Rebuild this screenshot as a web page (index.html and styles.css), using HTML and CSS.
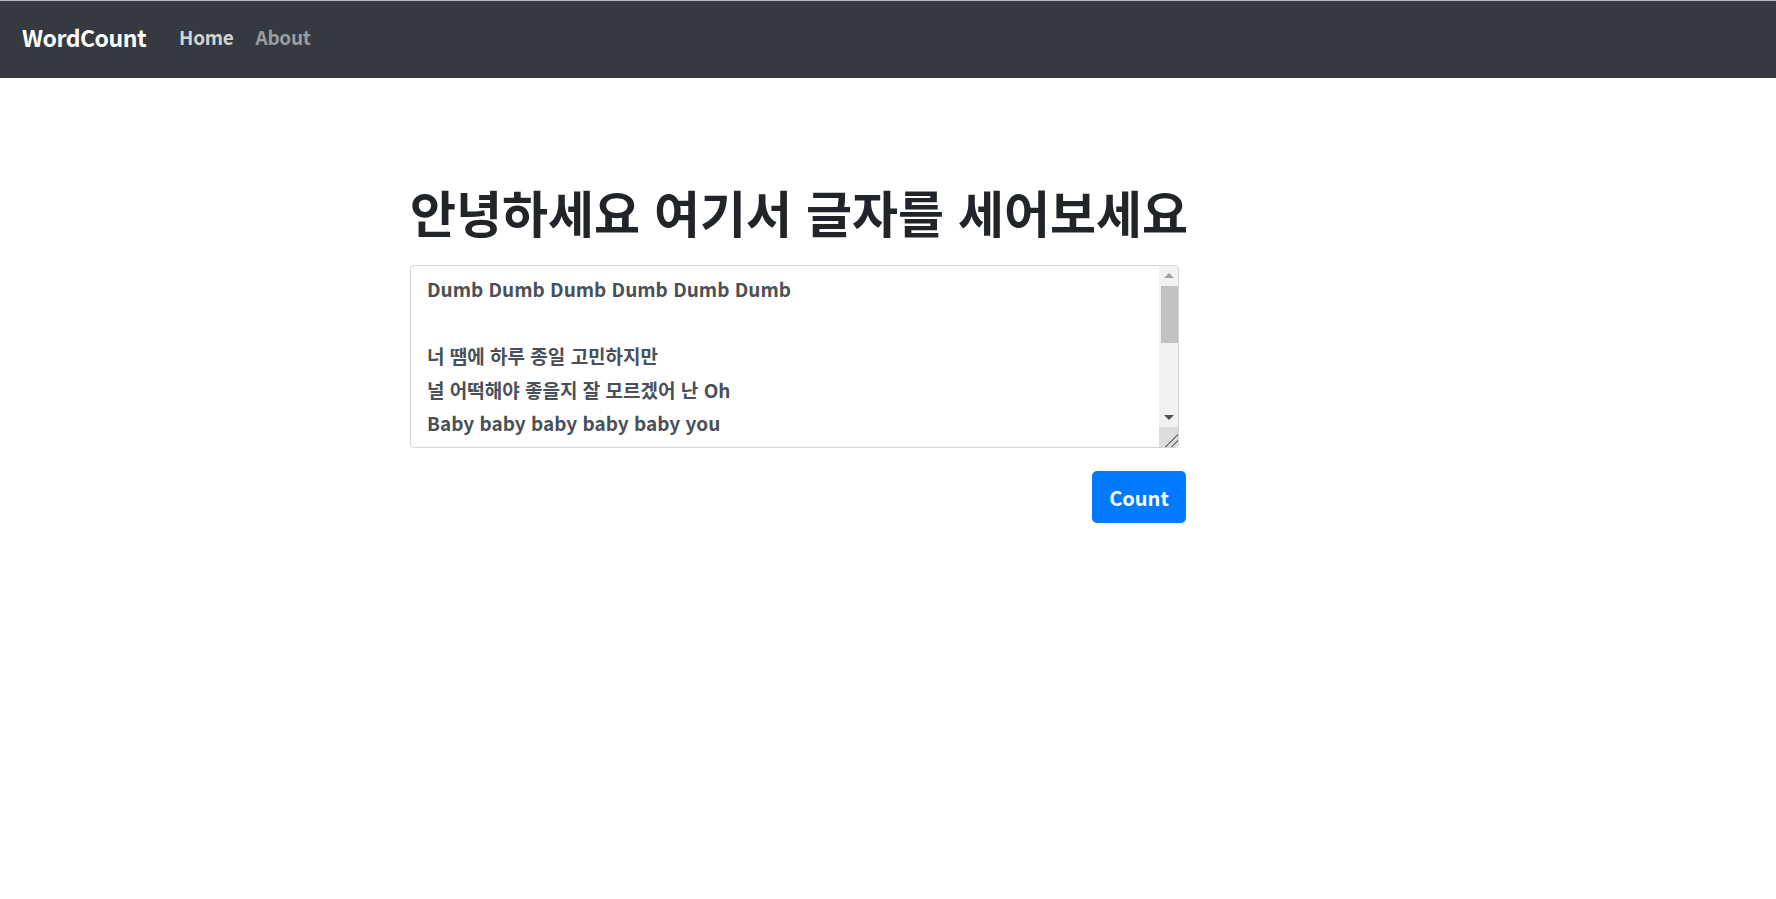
FILE: index.html
```html
<!DOCTYPE html>
<html lang="ko">
<head>
<meta charset="utf-8">
<title>WordCount</title>
<link rel="stylesheet" href="styles.css">
</head>
<body>
<nav class="navbar">
  <a class="brand" href="#">WordCount</a>
  <ul class="nav">
    <li><a class="nav-link active" href="#">Home</a></li>
    <li><a class="nav-link" href="#">About</a></li>
  </ul>
</nav>
<main class="main">
  <h1 class="title">안녕하세요 여기서 글자를 세어보세요</h1>
  <form class="form">
    <div class="field">
      <textarea class="input" name="fulltext">Dumb Dumb Dumb Dumb Dumb Dumb

너 땜에 하루 종일 고민하지만
널 어떡해야 좋을지 잘 모르겠어 난 Oh
Baby baby baby baby baby you
Baby baby baby baby baby baby
I'm so dumb dumb dumb dumb dumb
Dumb Dumb Dumb Dumb Dumb Dumb</textarea>
      <div class="scrollbar" aria-hidden="true">
        <div class="sb-btn"><span class="arrow-up"></span></div>
        <div class="sb-track"><div class="sb-thumb"></div></div>
        <div class="sb-btn"><span class="arrow-down"></span></div>
        <div class="sb-corner"></div>
      </div>
    </div>
    <div class="actions">
      <button class="btn" type="submit">Count</button>
    </div>
  </form>
</main>
</body>
</html>
```
FILE: styles.css
```css
html, body {
  margin: 0;
  padding: 0;
  background: #fff;
  font-family: "Noto Sans CJK KR", "Noto Sans", sans-serif;
  color: #212529;
}

.navbar {
  box-sizing: border-box;
  height: 78px;
  border-top: 1px solid #b9bcbf;
  background: #343a40;
  display: flex;
  align-items: center;
  padding: 0 22px 6px 22px;
}

.brand {
  color: #fff;
  text-decoration: none;
  font-size: 23px;
  font-weight: 700;
  letter-spacing: -0.5px;
  margin-right: 33px;
}

.nav {
  list-style: none;
  margin: 0;
  padding: 0;
  display: flex;
  gap: 22px;
}

.nav-link {
  text-decoration: none;
  font-size: 19px;
  font-weight: 700;
  letter-spacing: -0.3px;
  color: rgba(255, 255, 255, 0.5);
}

.nav-link.active {
  color: rgba(255, 255, 255, 0.78);
}

.main {
  margin-left: 410px;
  width: 776px;
  padding-top: 104px;
}

.title {
  margin: 0 0 24px 0;
  font-size: 50px;
  line-height: 59px;
  font-weight: 700;
  letter-spacing: 0;
  color: #212529;
  white-space: nowrap;
}

.form {
  margin: 0;
}

.field {
  position: relative;
  width: 769px;
  height: 183px;
}

.input {
  display: block;
  box-sizing: border-box;
  width: 100%;
  height: 100%;
  margin: 0;
  padding: 6px 16px;
  border: 1px solid #ced4da;
  border-radius: 4px;
  font-family: "Noto Sans CJK KR", "Noto Sans", sans-serif;
  font-size: 19px;
  font-weight: 700;
  line-height: 33.5px;
  color: #495057;
  background: #fff;
  overflow: hidden;
  resize: none;
  scrollbar-width: none;
}

.scrollbar {
  position: absolute;
  top: 1px;
  right: 1px;
  bottom: 1px;
  width: 19px;
  display: flex;
  flex-direction: column;
  background: #f1f1f1;
  border-top-right-radius: 3px;
  border-bottom-right-radius: 3px;
  overflow: hidden;
}

.sb-btn {
  height: 19px;
  flex: none;
  display: flex;
  align-items: center;
  justify-content: center;
}

.arrow-up {
  width: 0;
  height: 0;
  border-left: 5px solid transparent;
  border-right: 5px solid transparent;
  border-bottom: 5px solid #a3a3a3;
}

.arrow-down {
  width: 0;
  height: 0;
  border-left: 5px solid transparent;
  border-right: 5px solid transparent;
  border-top: 5px solid #505050;
}

.sb-track {
  flex: 1;
  padding: 1px 0 0 2px;
}

.sb-thumb {
  height: 57px;
  background: #c1c1c1;
}

.sb-corner {
  height: 20px;
  flex: none;
  background-color: #dcdcdc;
  background-image: linear-gradient(135deg, transparent 66%, #7a7a7a 66%, #7a7a7a 70%, transparent 70%, transparent 82%, #7a7a7a 82%, #7a7a7a 86%, transparent 86%);
}

.actions {
  display: flex;
  justify-content: flex-end;
  margin-top: 23px;
}

.btn {
  box-sizing: border-box;
  width: 94px;
  height: 52px;
  border: none;
  border-radius: 5px;
  background: #007bff;
  color: #fff;
  font-family: "Noto Sans CJK KR", "Noto Sans", sans-serif;
  font-size: 20px;
  font-weight: 700;
  cursor: pointer;
}
```
